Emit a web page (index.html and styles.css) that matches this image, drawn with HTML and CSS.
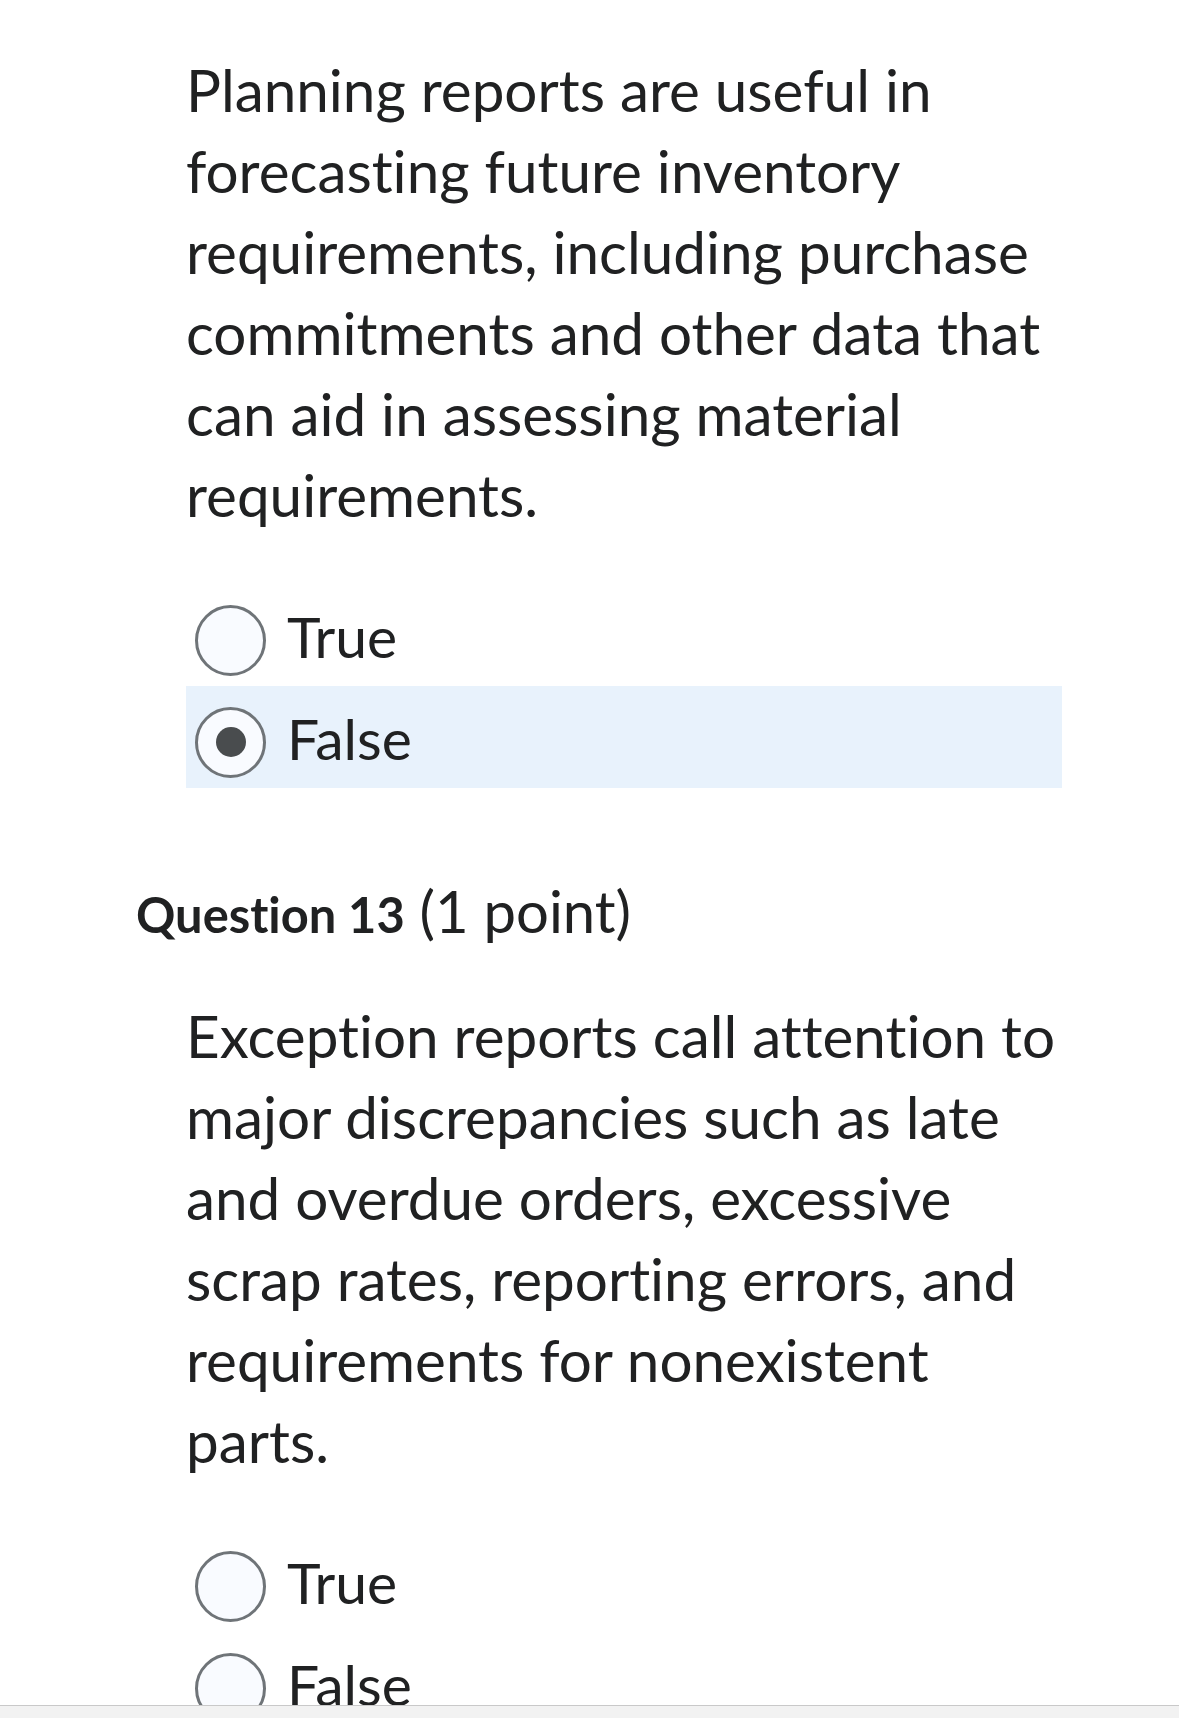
FILE: index.html
```html
<!DOCTYPE html>
<html>
<head>
<meta charset="utf-8">
<link rel="stylesheet" href="styles.css">
</head>
<body>
<div class="page">
  <section class="question">
    <div class="qtext">Planning reports are useful in forecasting future inventory requirements, including purchase commitments and other data that can aid in assessing material requirements.</div>
    <div class="options">
      <label class="opt"><span class="radio"></span><span class="label">True</span></label>
      <label class="opt selected"><span class="radio"><span class="dot"></span></span><span class="label">False</span></label>
    </div>
  </section>
  <section class="question">
    <h2 class="qhead"><b>Question 13</b> (1 point)</h2>
    <div class="qtext">Exception reports call attention to major discrepancies such as late and overdue orders, excessive scrap rates, reporting errors, and requirements for nonexistent parts.</div>
    <div class="options">
      <label class="opt"><span class="radio"></span><span class="label">True</span></label>
      <label class="opt"><span class="radio"></span><span class="label">False</span></label>
    </div>
  </section>
</div>
<div class="bottombar"></div>
</body>
</html>
```
FILE: styles.css
```css
html, body {
  margin: 0;
  padding: 0;
  background: #ffffff;
}
body {
  font-family: Lato, "Noto Sans", sans-serif;
  color: #202122;
  overflow: hidden;
  height: 1718px;
  font-variant-ligatures: none;
}
.page {
  padding: 49px 0 0 136px;
}
.qtext {
  margin-left: 50px;
  width: 895px;
  font-size: 58.4px;
  line-height: 81px;
}
.options {
  margin-left: 50px;
  width: 876px;
  margin-top: 49px;
  display: flex;
  flex-direction: column;
}
.opt {
  height: 102px;
  box-sizing: border-box;
  padding: 10px 0 0 9px;
  display: flex;
  align-items: center;
  gap: 21px;
}
.opt.selected {
  background: #e8f2fc;
}
.radio {
  width: 71px;
  height: 71px;
  box-sizing: border-box;
  border: 3px solid #6f7478;
  border-radius: 50%;
  background: #f9fbff;
  display: flex;
  align-items: center;
  justify-content: center;
  flex-shrink: 0;
}
.dot {
  width: 30px;
  height: 30px;
  border-radius: 50%;
  background: #494c4e;
}
.label {
  font-size: 57px;
  line-height: 1;
  margin-bottom: 8px;
}
.qhead {
  margin: 92px 0 50px 0;
  font-size: 58px;
  font-weight: 400;
  line-height: 62px;
}
.qhead b {
  font-weight: 700;
  font-size: 48.8px;
}
.bottombar {
  position: fixed;
  left: 0;
  right: 0;
  bottom: 0;
  height: 12px;
  background: #f2f2f2;
  border-top: 1px solid #c9c9c9;
}
```
